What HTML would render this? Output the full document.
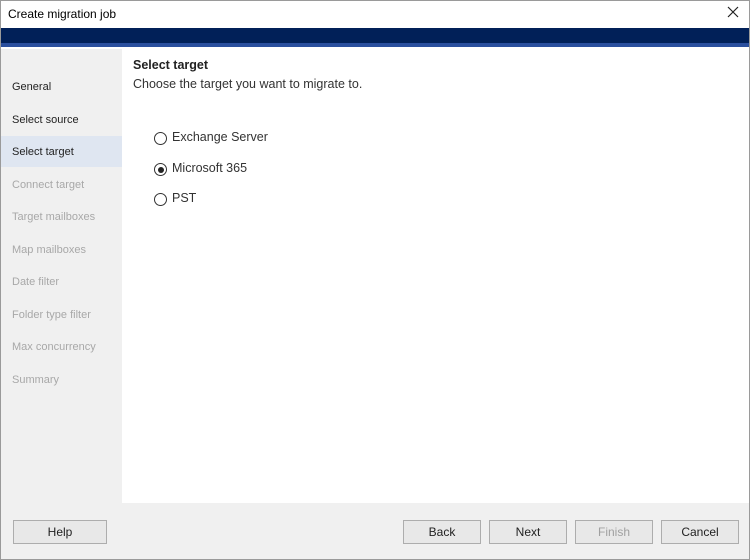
<!DOCTYPE html>
<html><head><meta charset="utf-8"><style>
*{margin:0;padding:0;box-sizing:border-box}
body{width:750px;height:560px;overflow:hidden;font-family:"Segoe UI","Liberation Sans",sans-serif;font-size:12px;color:#222;background:#f0f0f0;position:relative}
.win{position:absolute;left:0;top:0;width:750px;height:560px;border:1px solid #9a9a9a;background:#f0f0f0}
.title{position:absolute;left:0;top:0;width:748px;height:27px;background:#fff}
.title span{position:absolute;left:7px;top:6px;font-size:12px;color:#000}
.close{position:absolute;right:8px;top:3px;width:16px;height:16px}
.dark{position:absolute;left:0;top:27px;width:748px;height:15px;background:#012058}
.stripe{position:absolute;left:0;top:42px;width:748px;height:4px;background:#2a4f9e}
.gap{position:absolute;left:0;top:46px;width:748px;height:2px;background:#fff}
.side{position:absolute;left:0;top:48px;width:121px;height:454px;background:#f0f0f0}
.side div{position:absolute;left:0;width:121px;height:31px;padding-left:11px;line-height:33px;font-size:11px;color:#222}
.side .dis{color:#a8a8a8}
.side .sel{background:#dfe6f1}
.content{position:absolute;left:121px;top:48px;width:627px;height:454px;background:#fff}
h1{position:absolute;left:11px;top:9px;font-size:12.5px;font-weight:bold;color:#222}
.sub{position:absolute;left:11px;top:28px;font-size:12.5px;color:#333}
.r{position:absolute;left:32px;font-size:12.5px;color:#333}
.r i{position:absolute;left:0;top:2px;width:13px;height:13px;border:1px solid #333;border-radius:50%;background:#fff}
.r i b{position:absolute;left:2.5px;top:2.5px;width:6px;height:6px;border-radius:50%;background:#222}
.r span{position:absolute;left:18px;top:0px;white-space:nowrap}
.btn{position:absolute;top:519px;height:24px;width:78px;border:1px solid #adadad;background:#e8e8e8;text-align:center;line-height:22px;font-size:12px;color:#222}
</style></head><body>
<div class="win">
<div class="title"><span>Create migration job</span>
<svg class="close" viewBox="0 0 16 16"><path d="M3 3L13 13M13 3L3 13" stroke="#222" stroke-width="1.2"/></svg></div>
<div class="dark"></div><div class="stripe"></div><div class="gap"></div>
<div class="side">
<div style="top:22px">General</div>
<div style="top:55px">Select source</div>
<div class="sel" style="top:87px">Select target</div>
<div class="dis" style="top:120px">Connect target</div>
<div class="dis" style="top:152px">Target mailboxes</div>
<div class="dis" style="top:185px">Map mailboxes</div>
<div class="dis" style="top:217px">Date filter</div>
<div class="dis" style="top:250px">Folder type filter</div>
<div class="dis" style="top:282px">Max concurrency</div>
<div class="dis" style="top:315px">Summary</div>
</div>
<div class="content">
<h1>Select target</h1>
<div class="sub">Choose the target you want to migrate to.</div>
<div class="r" style="top:81px"><i></i><span>Exchange Server</span></div>
<div class="r" style="top:112px"><i><b></b></i><span>Microsoft 365</span></div>
<div class="r" style="top:142px"><i></i><span>PST</span></div>
</div>
<div class="btn" style="left:12px;width:94px">Help</div>
<div class="btn" style="left:402px">Back</div>
<div class="btn" style="left:488px">Next</div>
<div class="btn" style="left:574px;color:#a0a0a0">Finish</div>
<div class="btn" style="left:660px">Cancel</div>
</div>
</body></html>
